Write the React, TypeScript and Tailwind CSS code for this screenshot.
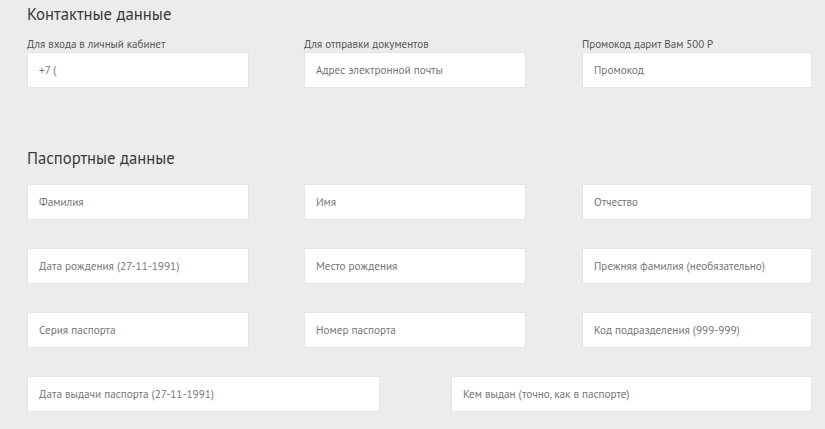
import React from 'react'

const Field = ({ placeholder, className = '' }: { placeholder: string; className?: string }) => (
  <div
    className={`h-[36px] bg-white border border-[#e4e4e4] flex items-center px-[11px] text-[11.2px] text-[#757575] ${className}`}
  >
    {placeholder}
  </div>
)

const Labeled = ({ label, placeholder, className = '' }: { label: string; placeholder: string; className?: string }) => (
  <div className={`flex flex-col ${className}`}>
    <span className="text-[11px] leading-[14px] text-[#555] mb-[1px]">{label}</span>
    <Field placeholder={placeholder} />
  </div>
)

export default function App() {
  return (
    <div
      className="w-[825px] h-[429px] overflow-hidden bg-[#ececec] pl-[27px] pt-[3px]"
      style={{ fontFamily: '"PT Sans", "Liberation Sans", Arial, sans-serif' }}
    >
      {/* Контакты */}
      <h2 className="text-[16.7px] leading-[22px] text-[#3a3a3a]">Контактные данные</h2>
      <div className="flex mt-[12px]">
        <Labeled className="w-[222px]" label="Для входа в личный кабинет" placeholder="+7 (" />
        <Labeled className="w-[222px] ml-[55px]" label="Для отправки документов" placeholder="Адрес электронной почты" />
        <Labeled className="w-[230px] ml-[56px]" label="Промокод дарит Вам 500 Р" placeholder="Промокод" />
      </div>

      {/* Паспорт */}
      <h2 className="text-[16.7px] leading-[22px] text-[#3a3a3a] mt-[59px]">Паспортные данные</h2>
      <div className="flex flex-col gap-[28px] mt-[15px]">
        <div className="flex">
          <Field className="w-[222px]" placeholder="Фамилия" />
          <Field className="w-[222px] ml-[55px]" placeholder="Имя" />
          <Field className="w-[230px] ml-[56px]" placeholder="Отчество" />
        </div>
        <div className="flex">
          <Field className="w-[222px]" placeholder="Дата рождения (27-11-1991)" />
          <Field className="w-[222px] ml-[55px]" placeholder="Место рождения" />
          <Field className="w-[230px] ml-[56px]" placeholder="Прежняя фамилия (необязательно)" />
        </div>
        <div className="flex">
          <Field className="w-[222px]" placeholder="Серия паспорта" />
          <Field className="w-[222px] ml-[55px]" placeholder="Номер паспорта" />
          <Field className="w-[230px] ml-[56px]" placeholder="Код подразделения (999-999)" />
        </div>
        <div className="flex">
          <Field className="w-[353px]" placeholder="Дата выдачи паспорта (27-11-1991)" />
          <Field className="w-[361px] ml-[71px]" placeholder="Кем выдан (точно, как в паспорте)" />
        </div>
      </div>
    </div>
  )
}
